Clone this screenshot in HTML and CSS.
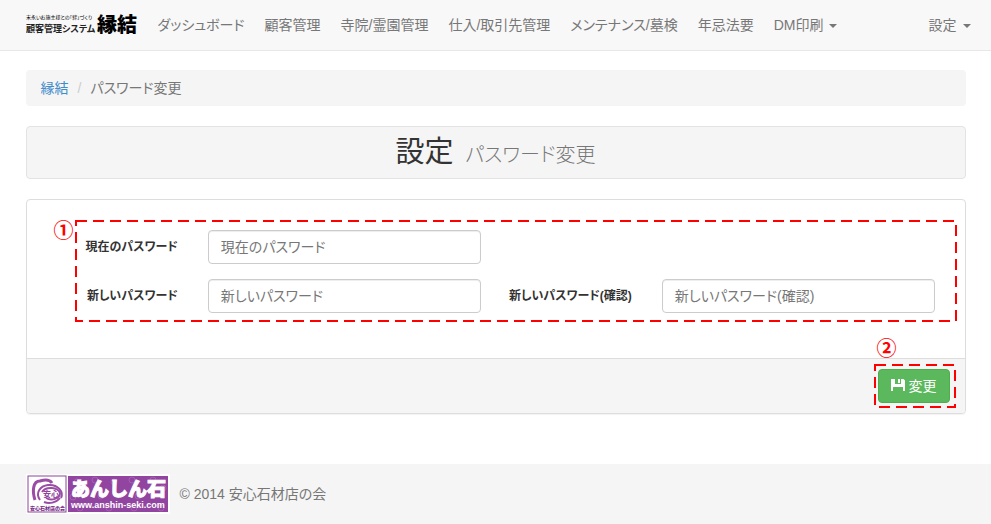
FILE: index.html
```html
<!DOCTYPE html>
<html lang="ja">
<head>
    <meta charset="UTF-8">
    <meta name="viewport" content="width=device-width, initial-scale=1.0">
    <title>パスワード変更 | 縁結</title>
    <link rel="stylesheet" href="styles.css">
</head>
<body>
    <header class="navbar">
        <div class="container navbar-inner">
            <a class="brand" href="#" aria-label="縁結">
                <svg width="112" height="24" viewBox="0 0 112 24">
                    <text class="brand-tagline" x="0" y="6">末永いお施主様との「絆」づくり</text>
                    <text class="brand-sub" x="0" y="19">顧客管理システム</text>
                    <text class="brand-name" x="71" y="19">縁結</text>
                </svg>
            </a>
            <nav class="nav">
                <a href="#">ダッシュボード</a>
                <a href="#">顧客管理</a>
                <a href="#">寺院/霊園管理</a>
                <a href="#">仕入/取引先管理</a>
                <a href="#">メンテナンス/墓検</a>
                <a href="#">年忌法要</a>
                <a href="#">DM印刷 <span class="caret"></span></a>
            </nav>
            <nav class="nav nav-right">
                <a href="#">設定 <span class="caret"></span></a>
            </nav>
        </div>
    </header>

    <main class="container">
        <ol class="breadcrumb">
            <li><a href="#">縁結</a></li>
            <li>パスワード変更</li>
        </ol>

        <div class="page-title">
            <h1>設定 <small>パスワード変更</small></h1>
        </div>

        <form class="panel">
            <div class="panel-body">
                <div class="form-grid">
                    <label for="current">現在のパスワード</label>
                    <div class="field"><input type="password" id="current" placeholder="現在のパスワード"></div>
                    <label class="row-start" for="new">新しいパスワード</label>
                    <div class="field"><input type="password" id="new" placeholder="新しいパスワード"></div>
                    <label for="confirm">新しいパスワード(確認)</label>
                    <div class="field"><input type="password" id="confirm" placeholder="新しいパスワード(確認)"></div>

                    <div class="callout callout-fields">
                        <svg><rect width="100%" height="100%"/></svg>
                        <span class="callout-num">①</span>
                    </div>
                </div>
            </div>
            <div class="panel-footer">
                <div class="submit">
                    <button type="button" class="btn-success">
                        <svg width="14" height="14" viewBox="0 0 14 14">
                            <path d="M0 0h4v5h6V0h2.500L14 1.500V12h-2V8H2v4H0zM7 0h2v4H7z" fill="#fff"/>
                        </svg>
                        変更
                    </button>
                    <div class="callout callout-submit">
                        <svg><rect width="100%" height="100%"/></svg>
                        <span class="callout-num">②</span>
                    </div>
                </div>
            </div>
        </form>
    </main>

    <footer class="footer">
        <div class="container footer-inner">
            <a href="#" aria-label="あんしん石">
                <svg class="footer-logo" width="144" height="40" viewBox="0 0 144 40">
                    <rect width="144" height="40" fill="#fff"/>
                    <rect x="2" y="2" width="38" height="36" fill="#fff" stroke="#8f449b"/>
                    <g fill="none" stroke="#9a4da5">
                        <path d="M9 26C6 17 7 7 14 7c6-2 10-1 12 2" stroke-width="3"/>
                        <path d="M14 26C9 19 14 12 22 11c10-1 16 7 13 13" stroke-width="2"/>
                        <path d="M16 18c4-6 16-5 18 1 0 6-9 8-14 5" stroke-width="2"/>
                        <path d="M18 28c5 2 12 1 16-4" stroke-width="2"/>
                    </g>
                    <text class="logo-mark" x="17" y="23">安心</text>
                    <text class="logo-group" x="4" y="36">安心石材店の会</text>
                    <rect x="42" y="2" width="100" height="36" fill="#9245a0"/>
                    <g fill="none" stroke="#a65fb1">
                        <circle cx="51" cy="8" r="3"/><circle cx="69" cy="6" r="3"/><circle cx="88" cy="8" r="3"/>
                        <circle cx="106" cy="6" r="3"/><circle cx="127" cy="6" r="3"/><circle cx="137" cy="14" r="3"/>
                        <circle cx="47" cy="23" r="3"/><circle cx="75" cy="22" r="3"/><circle cx="112" cy="22" r="3"/>
                        <circle cx="54" cy="34" r="3"/><circle cx="83" cy="34" r="3"/><circle cx="108" cy="34" r="3"/>
                        <circle cx="135" cy="34" r="3"/>
                    </g>
                    <text class="logo-name" x="45" y="22">あんしん石</text>
                    <text class="logo-url" x="45" y="34">www.anshin-seki.com</text>
                </svg>
            </a>
            <p>© 2014 安心石材店の会</p>
        </div>
    </footer>
</body>
</html>
```
FILE: styles.css
```css
* {
    box-sizing: border-box;
}

body {
    margin: 0;
    min-height: 100vh;
    display: flex;
    flex-direction: column;
    font-family: "Liberation Sans", "Noto Sans CJK JP", sans-serif;
    font-feature-settings: "palt";
    font-size: 14px;
    line-height: 20px;
    color: #333;
    background: #fff;
}

a {
    color: #428bca;
    text-decoration: none;
}

.container {
    width: 100%;
    max-width: 940px;
    margin: 0 auto;
}

/* navbar */
.navbar {
    background: #f8f8f8;
    border-bottom: 1px solid #e7e7e7;
}

.navbar-inner {
    display: flex;
    align-items: center;
    min-height: 50px;
}

.brand {
    display: flex;
    margin-right: 10px;
}

.brand-tagline {
    font-family: "Liberation Serif", "Noto Sans CJK JP", serif;
    font-size: 5px;
    fill: #000;
}

.brand-sub {
    font-size: 9px;
    font-weight: bold;
    fill: #222;
}

.brand-name {
    font-size: 20px;
    font-weight: 900;
    fill: #000;
}

.nav {
    display: flex;
    white-space: nowrap;
}

.nav a {
    padding: 15px 10px;
    color: #777;
}

.nav-right {
    margin-left: auto;
    margin-right: -15px;
}

.caret {
    display: inline-block;
    margin-left: 2px;
    vertical-align: middle;
    border-top: 4px solid #777;
    border-left: 4px solid transparent;
    border-right: 4px solid transparent;
}

/* breadcrumb and title */
.breadcrumb {
    display: flex;
    margin: 19px 0 20px;
    padding: 8px 15px;
    list-style: none;
    color: #777;
    background: #f5f5f5;
    border-radius: 4px;
}

.breadcrumb li + li::before {
    content: "/";
    padding: 0 9px;
    color: #ccc;
}

.page-title {
    margin-bottom: 20px;
    padding: 9px;
    text-align: center;
    background: #f5f5f5;
    border: 1px solid #e3e3e3;
    border-radius: 4px;
}

.page-title h1 {
    display: flex;
    justify-content: center;
    align-items: baseline;
    gap: 12px;
    margin: 0;
    font-size: 29px;
    font-weight: 400;
    line-height: 33px;
}

.page-title small {
    font-size: 20px;
    font-weight: 300;
    line-height: 20px;
    color: #777;
}

/* form */
.panel {
    border: 1px solid #ddd;
    border-radius: 4px;
    box-shadow: 0 1px 1px rgba(0, 0, 0, 0.05);
}

.panel-body {
    padding: 30px 15px 45px;
}

.form-grid {
    position: relative;
    display: grid;
    grid-template-columns: 2fr 4fr 2fr 4fr;
    row-gap: 15px;
}

.form-grid label {
    padding: 7px 15px 7px 0;
    font-size: 12px;
    font-weight: bold;
    text-align: right;
    white-space: nowrap;
}

.row-start {
    grid-column: 1;
}

.field {
    padding: 0 15px;
}

.field input {
    display: block;
    width: 100%;
    height: 34px;
    padding: 6px 12px;
    font: inherit;
    font-feature-settings: inherit;
    color: #555;
    background: #fff;
    border: 1px solid #ccc;
    border-radius: 4px;
    box-shadow: inset 0 1px 1px rgba(0, 0, 0, 0.075);
}

.field input::placeholder {
    color: #777;
    opacity: 1;
}

.panel-footer {
    display: flex;
    justify-content: flex-end;
    padding: 10px 15px;
    background: #f5f5f5;
    border-top: 1px solid #ddd;
    border-radius: 0 0 3px 3px;
}

.submit {
    position: relative;
}

.btn-success {
    display: flex;
    align-items: center;
    gap: 4px;
    height: 34px;
    padding: 0 12px;
    font: inherit;
    color: #fff;
    background: #5cb85c;
    border: 1px solid #4cae4c;
    border-radius: 4px;
    cursor: pointer;
}

/* numbered callouts */
.callout {
    position: absolute;
    pointer-events: none;
}

.callout svg {
    display: block;
    width: 100%;
    height: 100%;
    overflow: visible;
}

.callout rect {
    fill: none;
    stroke: #f00;
    stroke-width: 2px;
    stroke-dasharray: 11 6;
}

.callout-fields {
    inset: -9px -6px -8px 34px;
}

.callout-submit {
    inset: -4px -5px -4px -3px;
}

.callout-num {
    position: absolute;
    top: 0;
    left: -22px;
    font-size: 20px;
    font-weight: bold;
    line-height: 20px;
    color: #f00;
}

.callout-submit .callout-num {
    top: -26px;
    left: 2px;
}

/* footer */
.footer {
    margin-top: auto;
    background: #f5f5f5;
}

.footer-inner {
    display: flex;
    align-items: center;
    gap: 10px;
    min-height: 60px;
    color: #777;
}

.footer-inner p {
    margin: 0;
}

.footer-logo {
    display: block;
}

.logo-mark {
    font-size: 8px;
    font-weight: bold;
    fill: #8f449b;
}

.logo-group {
    font-size: 5px;
    font-weight: 900;
    fill: #7a3088;
}

.logo-name {
    font-size: 19px;
    font-weight: 900;
    font-feature-settings: normal;
    fill: #fff;
    stroke: #fff;
}

.logo-url {
    font-size: 9px;
    font-weight: bold;
    fill: #fff;
}
```
